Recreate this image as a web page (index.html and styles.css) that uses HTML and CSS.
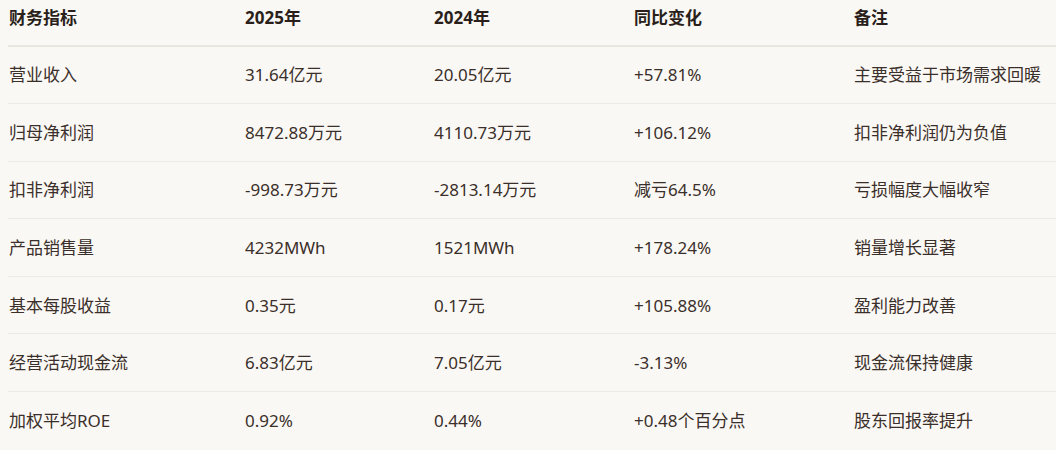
FILE: index.html
```html
<!DOCTYPE html>
<html lang="zh-CN">
<head>
<meta charset="utf-8">
<title>财务指标</title>
<link rel="stylesheet" href="styles.css">
</head>
<body>
<table class="fin-table">
  <colgroup>
    <col class="c1"><col class="c2"><col class="c3"><col class="c4"><col class="c5">
  </colgroup>
  <thead>
    <tr><th>财务指标</th><th>2025年</th><th>2024年</th><th>同比变化</th><th>备注</th></tr>
  </thead>
  <tbody>
    <tr><td>营业收入</td><td>31.64亿元</td><td>20.05亿元</td><td>+57.81%</td><td>主要受益于市场需求回暖</td></tr>
    <tr><td>归母净利润</td><td>8472.88万元</td><td>4110.73万元</td><td>+106.12%</td><td>扣非净利润仍为负值</td></tr>
    <tr><td>扣非净利润</td><td>-998.73万元</td><td>-2813.14万元</td><td>减亏64.5%</td><td>亏损幅度大幅收窄</td></tr>
    <tr><td>产品销售量</td><td>4232MWh</td><td>1521MWh</td><td>+178.24%</td><td>销量增长显著</td></tr>
    <tr><td>基本每股收益</td><td>0.35元</td><td>0.17元</td><td>+105.88%</td><td>盈利能力改善</td></tr>
    <tr><td>经营活动现金流</td><td>6.83亿元</td><td>7.05亿元</td><td>-3.13%</td><td>现金流保持健康</td></tr>
    <tr><td>加权平均ROE</td><td>0.92%</td><td>0.44%</td><td>+0.48个百分点</td><td>股东回报率提升</td></tr>
  </tbody>
</table>
</body>
</html>
```
FILE: styles.css
```css
html, body {
  background: #faf8f4;
}
body {
  margin: 0 0 0 8px;
  overflow: hidden;
  font-family: "Noto Sans", "Noto Sans CJK SC", sans-serif;
  font-size: 17px;
  color: #3a2f2a;
}
.fin-table {
  border-collapse: collapse;
  table-layout: fixed;
  width: 1048px;
}
.c1 { width: 236px; }
.c2 { width: 189px; }
.c3 { width: 200px; }
.c4 { width: 220px; }
.c5 { width: 203px; }
.fin-table th,
.fin-table td {
  text-align: left;
  padding-left: 1px;
  white-space: nowrap;
  line-height: 25px;
}
.fin-table th {
  font-weight: 700;
  color: #2a1f1b;
  padding-top: 5px;
  padding-bottom: 14.5px;
  border-bottom: 2px solid #e9e5df;
}
.fin-table td {
  padding-top: 15.8px;
  padding-bottom: 15.8px;
  border-bottom: 1px solid #eeeae4;
}
.fin-table tbody tr:last-child td {
  border-bottom: none;
}
```
